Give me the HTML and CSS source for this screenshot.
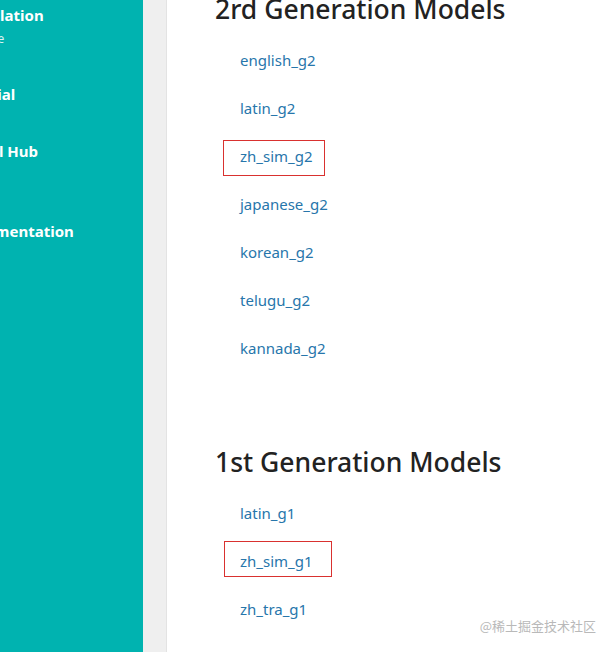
FILE: index.html
```html
<!DOCTYPE html>
<html>
<head>
    <meta charset="UTF-8">
    <meta name="viewport" content="width=device-width, initial-scale=1">
    <title>Models</title>
    <link rel="stylesheet" href="styles.css">
</head>
<body>
    <!-- Menu lateral -->
    <div class="sidebar">
        <ul class="nav">
            <li class="nav-item nav-install">Installation<span class="nav-sub">Release</span></li>
            <li class="nav-item nav-tutorial">Tutorial</li>
            <li class="nav-item nav-hub">Model Hub</li>
            <li class="nav-item nav-docs">Documentation</li>
        </ul>
    </div>
    <div class="gutter"></div>

    <!-- Conteúdo principal -->
    <div class="content">
        <h2 class="section-title first">2rd Generation Models</h2>
        <ul class="models">
            <li><a href="#">english_g2</a></li>
            <li><a href="#">latin_g2</a></li>
            <li><a href="#" class="marked">zh_sim_g2<span class="mark mark-g2"></span></a></li>
            <li><a href="#">japanese_g2</a></li>
            <li><a href="#">korean_g2</a></li>
            <li><a href="#">telugu_g2</a></li>
            <li><a href="#">kannada_g2</a></li>
        </ul>

        <h2 class="section-title">1st Generation Models</h2>
        <ul class="models">
            <li><a href="#">latin_g1</a></li>
            <li><a href="#" class="marked">zh_sim_g1<span class="mark mark-g1"></span></a></li>
            <li><a href="#">zh_tra_g1</a></li>
        </ul>
    </div>

    <div class="watermark">@稀土掘金技术社区</div>
</body>
</html>
```

FILE: styles.css
```css
/* Estilos gerais */
body {
    font-family: "Noto Sans", "Open Sans", sans-serif;
    margin: 0;
    padding: 0;
    display: flex;
    height: 652px;
    overflow: hidden;
    background: #fff;
}

/* Menu lateral */
.sidebar {
    width: 143px;
    flex-shrink: 0;
    background: #00b3b0;
    overflow: hidden;
}

.nav {
    list-style: none;
    margin: 0 0 0 -43px;
    padding: 0;
    color: #fff;
}

.nav-item {
    font-size: 15px;
    font-weight: 700;
    line-height: 20px;
    white-space: nowrap;
}

.nav-install {
    padding-top: 5px;
}

.nav-sub {
    display: block;
    font-size: 12px;
    font-weight: 400;
    line-height: 16px;
    margin-top: 6px;
    padding-left: 4px;
    opacity: 0.85;
}

.nav-tutorial {
    margin-top: 37px;
}

.nav-hub {
    margin-top: 37px;
}

.nav-docs {
    margin-top: 60px;
}

/* Faixa cinza entre o menu e o conteúdo */
.gutter {
    width: 23px;
    flex-shrink: 0;
    background: #efefef;
    border-right: 1px solid #e3e3e3;
}

/* Conteúdo */
.content {
    flex: 1;
    padding-left: 48px;
}

.section-title {
    font-size: 26.5px;
    font-weight: 500;
    color: #222;
    line-height: 32px;
    margin: 74px 0 11px;
}

.section-title.first {
    margin-top: -7px;
}

.models {
    list-style: none;
    margin: 0;
    padding: 0 0 0 25px;
}

.models li {
    height: 48px;
    line-height: 48px;
    font-size: 15px;
}

.models a {
    color: #2776ab;
    text-decoration: none;
}

.marked {
    position: relative;
}

/* Marcação vermelha em volta do modelo */
.mark {
    position: absolute;
    height: 34px;
    border: 1px solid #d9312f;
}

.mark-g2 {
    left: -17px;
    top: -6px;
    width: 100px;
}

.mark-g1 {
    left: -16px;
    top: -10px;
    width: 106px;
}

.watermark {
    position: absolute;
    right: 17px;
    bottom: 17px;
    font-size: 13px;
    color: #b9b9b9;
    font-family: "Noto Sans CJK SC", sans-serif;
}
```
